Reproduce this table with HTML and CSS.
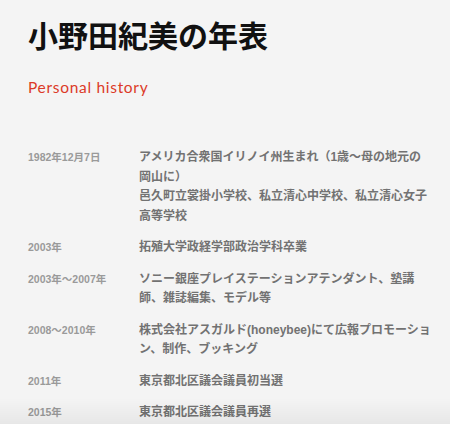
FILE: index.html
```html
<!DOCTYPE html>
<html lang="ja">
<head>
<meta charset="utf-8">
<link rel="stylesheet" href="styles.css">
</head>
<body>
<main class="page">
  <h1 class="title">小野田紀美の年表</h1>
  <p class="subtitle">Personal history</p>
  <dl class="history">
    <div class="row">
      <dt class="date">1982年12月7日</dt>
      <dd class="event">アメリカ合衆国イリノイ州生まれ（1歳〜母の地元の岡山に）<br>邑久町立裳掛小学校、私立清心中学校、私立清心女子高等学校</dd>
    </div>
    <div class="row">
      <dt class="date">2003年</dt>
      <dd class="event">拓殖大学政経学部政治学科卒業</dd>
    </div>
    <div class="row">
      <dt class="date">2003年〜2007年</dt>
      <dd class="event">ソニー銀座プレイステーションアテンダント、塾講師、雑誌編集、モデル等</dd>
    </div>
    <div class="row">
      <dt class="date">2008〜2010年</dt>
      <dd class="event">株式会社アスガルド(honeybee)にて広報プロモーション、制作、ブッキング</dd>
    </div>
    <div class="row">
      <dt class="date">2011年</dt>
      <dd class="event">東京都北区議会議員初当選</dd>
    </div>
    <div class="row">
      <dt class="date">2015年</dt>
      <dd class="event">東京都北区議会議員再選</dd>
    </div>
  </dl>
</main>
<div class="fade"></div>
</body>
</html>
```

FILE: styles.css
```css
html, body {
  margin: 0;
  padding: 0;
  background: #f4f4f4;
}
body {
  font-family: "Noto Sans CJK JP", "Noto Sans", sans-serif;
  height: 424px;
  overflow: hidden;
}
.page {
  padding: 16px 18px 0 28px;
}
.title {
  margin: 0;
  font-size: 30px;
  line-height: 36px;
  font-weight: 700;
  color: #111;
  letter-spacing: 0;
}
.subtitle {
  margin: 25px 0 0;
  font-family: "Lato", "Open Sans", sans-serif;
  font-size: 15.5px;
  line-height: 20px;
  letter-spacing: 0.7px;
  color: #dc3a27;
}
.history {
  margin: 51px 0 0;
  display: flex;
  flex-direction: column;
  gap: 12px;
}
.row {
  display: grid;
  grid-template-columns: 111px 1fr;
}
.date {
  font-family: "Liberation Sans", "Noto Sans CJK JP", sans-serif;
  font-size: 10.5px;
  line-height: 19.5px;
  color: #9a9a9a;
  font-weight: 700;
}
.event {
  margin: 0;
  font-family: "Liberation Sans", "Noto Sans CJK JP", sans-serif;
  font-size: 12px;
  line-height: 19.5px;
  font-weight: 700;
  color: #727272;
}
.fade {
  position: fixed;
  left: 0;
  right: 0;
  bottom: 0;
  height: 26px;
  background: linear-gradient(to bottom, rgba(0,0,0,0), rgba(0,0,0,0.05));
  pointer-events: none;
}
```
